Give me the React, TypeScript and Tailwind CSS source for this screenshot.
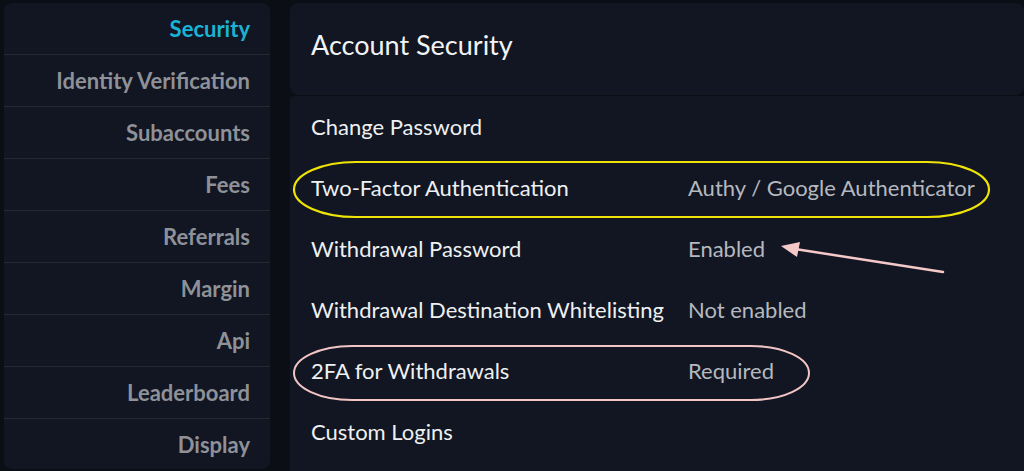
import React from 'react';

const menu = [
  'Security',
  'Identity Verification',
  'Subaccounts',
  'Fees',
  'Referrals',
  'Margin',
  'Api',
  'Leaderboard',
  'Display',
];

const rows: { label: string; value?: string }[] = [
  { label: 'Change Password' },
  { label: 'Two-Factor Authentication', value: 'Authy / Google Authenticator' },
  { label: 'Withdrawal Password', value: 'Enabled' },
  { label: 'Withdrawal Destination Whitelisting', value: 'Not enabled' },
  { label: '2FA for Withdrawals', value: 'Required' },
  { label: 'Custom Logins' },
];

export default function App() {
  return (
    <div
      className="relative h-[471px] w-[1024px] overflow-hidden bg-[#0b0e15] pl-1 pt-[3px]"
      style={{ fontFamily: 'Lato, "Open Sans", sans-serif' }}
    >
      <div className="flex gap-5">
        {/* Sidebar */}
        <nav className="h-[466px] w-[266px] shrink-0 overflow-hidden rounded-lg bg-[#111622]">
          {menu.map((item, i) => (
            <div
              key={item}
              className={`flex h-[52px] items-center justify-end border-b border-[#242934] pr-5 text-[22px] font-bold ${
                i === 0 ? 'text-[#1bb3d4]' : 'text-[#8e9198]'
              }`}
            >
              {item}
            </div>
          ))}
        </nav>

        {/* Main */}
        <div className="flex flex-1 flex-col gap-px">
          <div className="flex h-[92px] items-center rounded-lg bg-[#111622] pb-2 pl-[21px]">
            <h1 className="text-[27px] text-[#f1f3f5]">Account Security</h1>
          </div>
          <div className="h-[400px] rounded-tl-sm bg-[#111622] pl-[21px]">
            {rows.map((r) => (
              <div key={r.label} className="flex h-[61px] items-center pb-px text-[22px]">
                <span className="w-[377px] shrink-0 text-[#eef0f2]">{r.label}</span>
                {r.value && <span className="text-[#b5b9bf]">{r.value}</span>}
              </div>
            ))}
          </div>
        </div>
      </div>

      {/* Annotations */}
      <svg className="pointer-events-none absolute left-0 top-0" width="1024" height="471" viewBox="0 0 1024 471">
        <rect x="294" y="162" width="695" height="55" rx="62" ry="27.5" fill="none" stroke="#f0e406" strokeWidth="2.2" />
        <rect x="294" y="346" width="515" height="54" rx="58" ry="27" fill="none" stroke="#f3c4c4" strokeWidth="2" />
        <line x1="943" y1="272" x2="795" y2="249" stroke="#f6c9c9" strokeWidth="2.5" strokeLinecap="round" />
        <polygon points="781,246 800,242 797,257" fill="#f6c9c9" />
      </svg>
    </div>
  );
}
